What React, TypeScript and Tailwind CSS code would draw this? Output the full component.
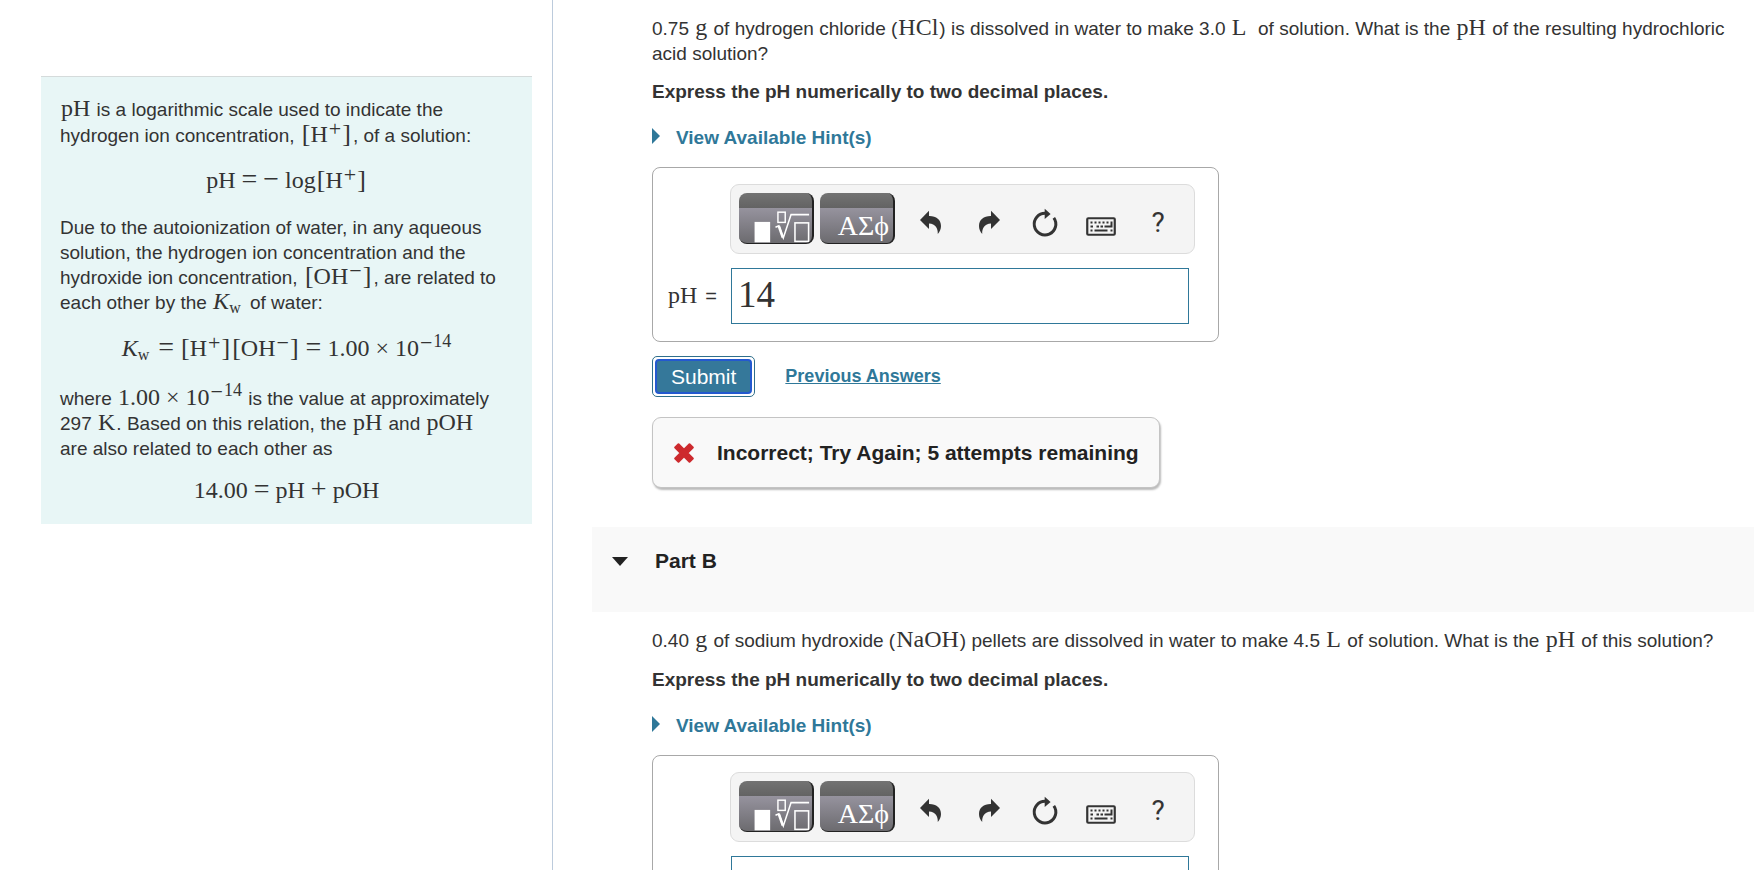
import type { ReactNode } from "react";

function M({ children }: { children: ReactNode }) {
  return (
    <span className="mx-px font-['Liberation_Serif',serif] text-[24px] leading-[0] whitespace-nowrap">{children}</span>
  );
}

function Br({ children }: { children: ReactNode }) {
  return (
    <>
      <span className="ml-px text-[26px]">[</span>
      {children}
      <span className="mr-px text-[26px]">]</span>
    </>
  );
}

function Sign({ children }: { children: ReactNode }) {
  return <sup className="-top-[6px] mx-px text-[22px]">{children}</sup>;
}

function Op({ children }: { children: ReactNode }) {
  return <span className="mx-[6px] text-[28px]">{children}</span>;
}

function TenToMinus14() {
  return (
    <>
      1.00<span className="mx-[6px]">×</span>10<Sign>−</Sign>
      <sup className="-top-[9px] text-[18px]">14</sup>
    </>
  );
}

function Kw() {
  return (
    <>
      <i>K</i>
      <sub className="mr-[3px] text-[16px]">w</sub>
    </>
  );
}

function Equation({ children }: { children: ReactNode }) {
  return (
    <div className="text-center font-['Liberation_Serif',serif] text-[24px] leading-[27px] whitespace-nowrap [&_span]:leading-[0]">
      {children}
    </div>
  );
}

function UndoIcon({ flip = false }: { flip?: boolean }) {
  return (
    <svg width="32" height="41" viewBox="0 0 32 41" fill="#333" aria-hidden="true">
      <path
        transform={flip ? "translate(35 0) scale(-1 1)" : undefined}
        d="M6 22 15 12.7V18C22 17.8 27 21.5 27 28c0 3-1.2 5.800-3.200 8C24 30 21.500 26 15 25.500V31Z"
      />
    </svg>
  );
}

function ResetIcon() {
  return (
    <svg width="32" height="41" viewBox="0 0 32 41" aria-hidden="true">
      <path d="M25.800 19.800A10.800 10.800 0 1 1 17.500 15.300" fill="none" stroke="#333" strokeWidth="3" />
      <path d="M16.700 10.800 22.600 15.900 16.700 21Z" fill="#333" />
    </svg>
  );
}

function KeyboardIcon() {
  return (
    <svg width="32" height="41" viewBox="0 0 32 41" aria-hidden="true">
      <rect x="2.250" y="20.250" width="27.500" height="16.500" rx="1" fill="none" stroke="#333" strokeWidth="2.200" />
      <g fill="none" stroke="#333" strokeWidth="2">
        <path d="M5.500 24.500H24" strokeDasharray="2 2" />
        <path d="M5.500 28.500H9.500M11.500 28.500H22.500" strokeDasharray="2.500 1.500" />
        <path d="M26.500 23.500V28.500H22" />
        <path d="M5.500 32.500H7.500M9.500 32.500H22.500M25.500 32.500H27.500" />
      </g>
    </svg>
  );
}

function TemplateIcon() {
  return (
    <svg width="75" height="51" viewBox="0 0 75 51" fill="none" stroke="#fff" aria-hidden="true">
      <rect x="16" y="29" width="16" height="21" fill="#fff" stroke="none" />
      <rect x="40" y="19" width="7.500" height="10.500" strokeWidth="1.500" />
      <path d="M37.500 34.500 41 33 45.500 45.500 53.500 21.500H72" strokeWidth="1.600" />
      <path d="M41 33.500 45 45" strokeWidth="2.600" />
      <rect x="57.500" y="30" width="14" height="19" strokeWidth="1.600" />
    </svg>
  );
}

const paletteButton =
  "flex h-[51px] w-[75px] items-center overflow-hidden rounded-lg border-r-2 border-b border-[#222] bg-[linear-gradient(#737373,#636363_15px,#96939e_15px,#6c6b6f)] text-white";
const toolButton = "flex h-[51px] w-14 items-center justify-center text-[#333]";

function AnswerBox({ id, value }: { id: string; value: string }) {
  return (
    <div className="mt-[17px] w-full max-w-[567px] rounded-lg border border-[#a8a8a8] pt-4 pr-[23px] pb-[17px]">
      <div className="ml-[77px] flex h-[70px] gap-[6px] rounded-[9px] border border-[#dcdcdc] bg-[#f4f4f4] pt-2 pl-2">
        <button type="button" aria-label="Templates" className={paletteButton}>
          <TemplateIcon />
        </button>
        <button type="button" aria-label="Symbols" className={paletteButton + " justify-end"}>
          <span className="pt-4 pr-1 font-['Liberation_Serif','DejaVu_Serif',serif] text-[28px] leading-[30px]">ΑΣϕ</span>
        </button>
        <div className="flex gap-px pl-px">
          <button type="button" aria-label="Undo" className={toolButton}>
            <UndoIcon />
          </button>
          <button type="button" aria-label="Redo" className={toolButton}>
            <UndoIcon flip />
          </button>
          <button type="button" aria-label="Reset" className={toolButton}>
            <ResetIcon />
          </button>
          <button type="button" aria-label="Keyboard shortcuts" className={toolButton}>
            <KeyboardIcon />
          </button>
          <button type="button" aria-label="Help" className={toolButton + " pt-[7px] font-[Roboto,sans-serif] text-[28px]"}>
            ?
          </button>
        </div>
      </div>
      <div className="mt-[14px] flex items-center pr-[6px]">
        <label htmlFor={id} className="flex w-[78px] shrink-0 items-baseline gap-2 pl-[15px]">
          <span className="font-['Liberation_Serif',serif] text-[24px]">pH</span>
          <span className="text-[20px]">=</span>
        </label>
        <input
          id={id}
          type="text"
          defaultValue={value}
          className="h-14 min-w-0 flex-1 border border-[#2f7899] px-[6px] pb-1 font-['Liberation_Serif',serif] text-[37px] text-[#333] outline-none"
        />
      </div>
    </div>
  );
}

function Hints() {
  return (
    <button type="button" className="mt-[21px] flex items-center gap-4 font-bold text-[#2f7899]">
      <svg width="8" height="25" viewBox="0 0 8 25" fill="currentColor" aria-hidden="true">
        <path d="M0 3 8 11 0 19Z" />
      </svg>
      View Available Hint(s)
    </button>
  );
}

export default function App() {
  return (
    <div className="flex h-screen overflow-hidden bg-white font-['Liberation_Sans',Arial,sans-serif] text-[19px] leading-[25px] text-[#333]">
      <aside className="w-[553px] shrink-0 border-r border-[#bccbdc] pt-[76px] pr-5 pl-[41px]">
        <div className="border-t border-[#d5dbdb] bg-[#e8f6f6] px-[19px] pt-5 pb-5">
          <p className="leading-[26px]">
            <M>pH</M> is a logarithmic scale used to indicate the
            <br />
            hydrogen ion concentration, <M><Br>H<Sign>+</Sign></Br></M>, of a solution:
          </p>
          <div className="pt-[18px] pb-[21px]">
            <Equation>
              pH<Op>=</Op>
              <span className="mr-[6px] text-[28px]">−</span>log<Br>H<Sign>+</Sign></Br>
            </Equation>
          </div>
          <p>
            Due to the autoionization of water, in any aqueous
            <br />
            solution, the hydrogen ion concentration and the
            <br />
            hydroxide ion concentration, <M><Br>OH<Sign>−</Sign></Br></M>, are related to
            <br />
            each other by the <M><Kw /></M> of water:
          </p>
          <div className="pt-5 pb-6">
            <Equation>
              <Kw />
              <Op>=</Op>
              <Br>H<Sign>+</Sign></Br>
              <Br>OH<Sign>−</Sign></Br>
              <Op>=</Op>
              <TenToMinus14 />
            </Equation>
          </div>
          <p>
            where <M><TenToMinus14 /></M> is the value at approximately
            <br />
            297 <M>K</M>. Based on this relation, the <M>pH</M> and <M>pOH</M>
            <br />
            are also related to each other as
          </p>
          <div className="pt-4">
            <Equation>
              14.00<Op>=</Op>pH<Op>+</Op>pOH
            </Equation>
          </div>
        </div>
      </aside>

      <main className="min-w-0 flex-1 pt-4 pr-[6px] pl-[39px]">
        <section className="pl-[60px]">
          <p>
            0.75 <M>g</M> of hydrogen chloride (<M>HCl</M>) is dissolved in water to make 3.0 <M>L</M>
            {"\u00a0 "}of solution. What is the <M>pH</M>
            {" of the resulting hydrochloric "}
            {"acid solution?"}
          </p>
          <p className="mt-[13px] font-bold">Express the pH numerically to two decimal places.</p>
          <Hints />
          <AnswerBox id="answer-a" value="14" />
          <div className="mt-[14px] flex items-center gap-[30px]">
            <button
              type="button"
              className="rounded-[5px] border border-[#2f6f8c] bg-white p-[2px] text-[21px] leading-[31px] text-white"
            >
              <span className="block rounded-[4px] border-2 border-[#2459cf] bg-[#35789a] px-[14px]">Submit</span>
            </button>
            <a href="#previous" className="text-[18px] font-bold text-[#2f7899] underline">
              Previous Answers
            </a>
          </div>
          <div className="mt-5 flex h-[71px] w-fit items-center gap-[23px] rounded-[9px] border border-[#c4c4c4] bg-[#f9f9f9] pr-5 pl-[21px] text-[21px] font-bold text-[#222] shadow-[1px_2px_2px_#bbb]">
            <svg width="20" height="20" viewBox="0 0 20 20" fill="#cd2a2e" stroke="#cd2a2e" strokeWidth="2" strokeLinejoin="round" aria-hidden="true">
              <path d="M4.500 1.200 10 6.700 15.500 1.200 18.800 4.500 13.300 10 18.800 15.500 15.500 18.800 10 13.300 4.500 18.800 1.200 15.500 6.700 10 1.200 4.500Z" />
            </svg>
            Incorrect; Try Again; 5 attempts remaining
          </div>
        </section>

        <button
          type="button"
          className="mt-[39px] flex h-[85px] w-full items-start gap-[27px] bg-[#f9f9f9] pt-[21px] pl-5 text-left text-[21px] font-bold text-[#222]"
        >
          <svg width="16" height="25" viewBox="0 0 16 25" fill="currentColor" aria-hidden="true">
            <path d="M0 9H16L8 18Z" />
          </svg>
          Part B
        </button>

        <section className="pt-4 pl-[60px]">
          <p>
            0.40 <M>g</M> of sodium hydroxide (<M>NaOH</M>) pellets are dissolved in water to make 4.5 <M>L</M> of
            solution. What is the <M>pH</M> of this solution?
          </p>
          <p className="mt-[14px] font-bold">Express the pH numerically to two decimal places.</p>
          <Hints />
          <AnswerBox id="answer-b" value="" />
        </section>
      </main>
    </div>
  );
}
